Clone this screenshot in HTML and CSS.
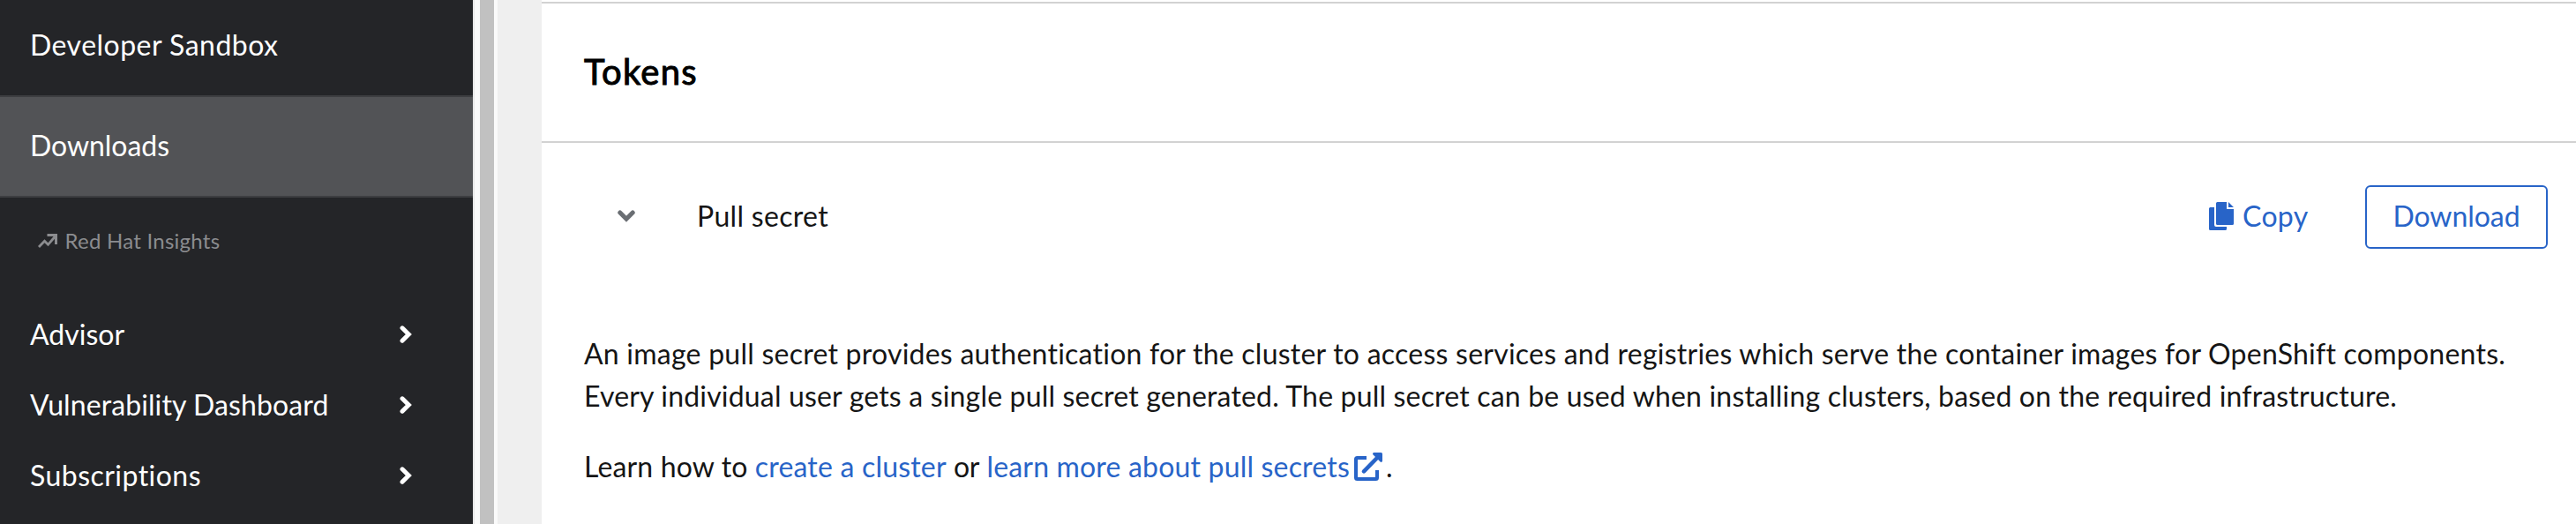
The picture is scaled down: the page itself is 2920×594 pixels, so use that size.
FILE: index.html
```html
<!DOCTYPE html>
<html lang="en">
<head>
<meta charset="utf-8">
<title>Downloads</title>
<link rel="stylesheet" href="styles.css">
</head>
<body>
<div class="page">
  <nav class="sidebar">
    <a class="nav-item nav-sandbox"><span class="t-sandbox">Developer Sandbox</span></a>
    <a class="nav-item nav-active"><span class="t-downloads">Downloads</span></a>
    <div class="nav-section">
      <svg class="trend-icon" viewBox="0 0 22 16"><path d="M1 15 7.500 8.300l4 4L19.500 3" fill="none" stroke="currentColor" stroke-width="2.800"/><path d="M10.500 0H22v12h-3V3h-8.500z" fill="currentColor"/></svg>
      <span class="t-insights">Red Hat Insights</span>
    </div>
    <a class="nav-item nav-group"><span class="t-advisor">Advisor</span><svg class="chevron-right" viewBox="0 0 14 20"><path d="M3 2.800 10.300 10 3 17.200"/></svg></a>
    <a class="nav-item nav-group"><span class="t-vuln">Vulnerability Dashboard</span><svg class="chevron-right" viewBox="0 0 14 20"><path d="M3 2.800 10.300 10 3 17.200"/></svg></a>
    <a class="nav-item nav-group"><span class="t-subs">Subscriptions</span><svg class="chevron-right" viewBox="0 0 14 20"><path d="M3 2.800 10.300 10 3 17.200"/></svg></a>
  </nav>
  <div class="scrollbar"><div class="scroll-thumb"></div></div>
  <main class="content">
    <h2 class="heading">Tokens</h2>
    <section class="row">
      <svg class="chevron-down" viewBox="0 0 20 14"><path d="M2.800 3 10 10.300 17.200 3"/></svg>
      <span class="row-title">Pull secret</span>
      <button class="copy"><svg class="copy-icon" viewBox="0 0 28 32"><path d="M1.500 6H6v20a2 2 0 0 0 2 2h12v2.500a1.500 1.500 0 0 1-1.500 1.500h-17A1.500 1.500 0 0 1 0 30.500v-23A1.500 1.500 0 0 1 1.500 6zM9.500 0H20v8h8v16.500a1.500 1.500 0 0 1-1.500 1.500h-17A1.500 1.500 0 0 1 8 24.500v-23A1.500 1.500 0 0 1 9.500 0zM22 0l6 6h-6z"/></svg><span>Copy</span></button>
      <button class="download">Download</button>
    </section>
    <div class="description">
      <p><span class="t-line1">An image pull secret provides authentication for the cluster to access services and registries which serve the container images for OpenShift components.</span><br><span class="t-line2">Every individual user gets a single pull secret generated. The pull secret can be used when installing clusters, based on the required infrastructure.</span></p>
      <p><span class="t-learn">Learn how to</span> <a class="t-create">create a cluster</a> <span class="t-or">or</span> <a class="t-more">learn more about pull secrets</a><svg class="external-icon" viewBox="0 0 32 32"><path d="M14 6H3.500A1.500 1.500 0 0 0 2 7.500v21A1.500 1.500 0 0 0 3.500 30h21a1.500 1.500 0 0 0 1.500-1.500V20" fill="none" stroke="currentColor" stroke-width="4"/><path d="M11 21.300 27 5" fill="none" stroke="currentColor" stroke-width="4.600" stroke-linecap="round"/><path d="M22.500 0h8A1.500 1.500 0 0 1 32 1.500v8a1.400 1.400 0 0 1-2.400 1L21.500 2.400A1.400 1.400 0 0 1 22.500 0z" fill="currentColor"/></svg><span>.</span></p>
    </div>
  </main>
</div>
</body>
</html>
```
FILE: styles.css
```css
* { box-sizing: border-box; }
body { margin: 0; background: #fff; color: #151515; font: 32px/48px Lato, "Liberation Sans", sans-serif; font-variant-ligatures: none; }
.page { display: flex; width: 2920px; height: 594px; overflow: hidden; }

.sidebar { width: 536px; background: #242528; color: #fff; flex: none; }
.nav-item { display: flex; align-items: center; padding-left: 34px; }
.nav-sandbox { height: 108px; padding-bottom: 6px; }
.nav-active { height: 116px; padding-bottom: 2px; background: #525356; border-top: 2px solid #3d3e41; border-bottom: 2px solid #3d3e41; }
.nav-section { display: flex; align-items: center; height: 116px; padding: 0 0 18px 43px; font-size: 24px; color: #8b8c8f; gap: 8.5px; }
.trend-icon { width: 22px; height: 16px; }
.nav-group { height: 80px; justify-content: space-between; padding: 0 69px 2px 34px; }
.chevron-right { width: 14px; height: 20px; fill: none; stroke: #fff; stroke-width: 5px; stroke-linecap: round; }

.scrollbar { display: flex; flex: none; width: 28px; background: #fafafa; border-left: 2px solid #e8e8e8; padding-left: 6px; }
.scroll-thumb { width: 16px; background: #c1c1c1; }

.content { flex: 1; border-left: 50px solid #efefef; padding-top: 2px; }
.heading { margin: 0; height: 160px; border-top: 2px solid #d2d2d2; border-bottom: 2px solid #d2d2d2; padding: 47px 0 0 48px; font-size: 40px; line-height: 60px; font-weight: 400; letter-spacing: 1.25px; color: #000; -webkit-text-stroke: 1px #000; }
.row { display: flex; align-items: center; height: 168px; padding: 0 32px 0 86px; }
.chevron-down { width: 20px; height: 14px; margin-bottom: 2px; fill: none; stroke: #6a6e73; stroke-width: 5px; stroke-linecap: round; }
.row-title { flex: 1; padding: 0 0 2px 70px; letter-spacing: .318px; }
button { font: inherit; color: #2864c8; background: none; border: 0; padding: 0 0 2px; display: flex; align-items: center; justify-content: center; }
.copy { gap: 10px; margin-right: 64.5px; letter-spacing: .32px; }
.copy-icon { width: 28px; height: 32px; fill: currentColor; }
.download { width: 207px; height: 72px; border: 2px solid #2864c8; border-radius: 6px; letter-spacing: -.04px; }

.description { padding: 47px 0 0 48px; white-space: nowrap; }
p { margin: 0 0 32px; }
.description a, .external-icon { color: #2864c8; }
.external-icon { width: 32px; height: 32px; margin: 0 4px 0 5px; vertical-align: -4px; }

/* Tracking per label */
.t-sandbox { letter-spacing: .475px; }
.t-downloads { letter-spacing: -.043px; }
.t-insights { letter-spacing: .25px; }
.t-vuln { letter-spacing: .1px; }
.t-subs { letter-spacing: .46px; }
.t-line1 { letter-spacing: .238px; }
.t-line2 { letter-spacing: .177px; }
.t-learn { letter-spacing: .147px; }
.t-create { letter-spacing: .2px; }
.t-or { letter-spacing: -.3px; }
.t-more { letter-spacing: .18px; }
```
